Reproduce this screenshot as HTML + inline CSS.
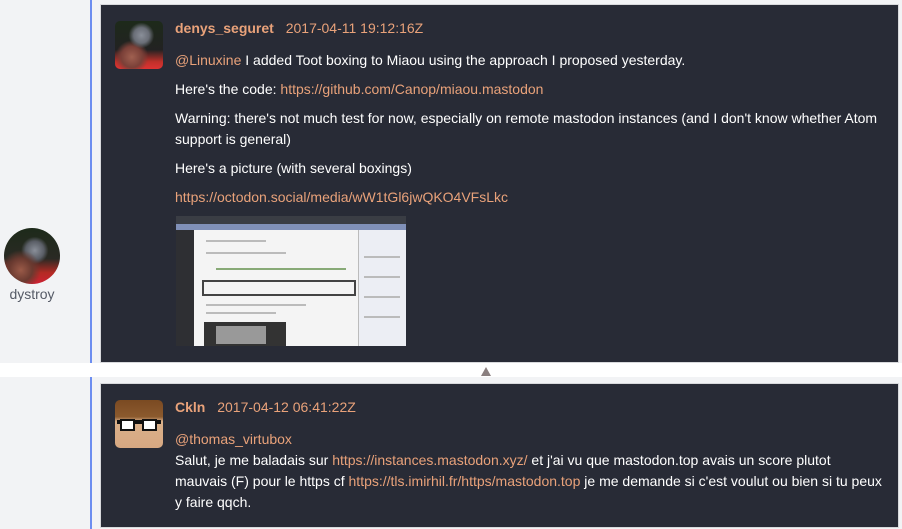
<!DOCTYPE html>
<html><head><meta charset="utf-8"><style>
*{margin:0;padding:0;box-sizing:border-box}
body{width:902px;height:529px;overflow:hidden;background:#f2f3f5;font-family:"Liberation Sans",sans-serif;font-size:14px;position:relative}
.vl{position:absolute;left:90px;top:0;width:2px;height:529px;background:#6d8ef0}
.gap{position:absolute;left:0;top:363px;width:902px;height:14px;background:#fff}
.card{position:absolute;left:100px;width:799px;background:#282b36;border:1px solid #d8d9dc;color:#fff}
.av{position:absolute;left:14px;width:48px;height:48px;border-radius:5px;overflow:hidden}
.n{position:absolute;left:74px;color:#e9a27a;font-size:14px}
.n b{margin-right:8px}
.t{position:absolute;left:74px;width:712px;line-height:21px}
.t p{margin-bottom:8px}
a{color:#e9a27a;text-decoration:none}
.ln{position:absolute;height:2px;background:#bbb}
</style></head><body>
<div class="vl"></div>
<div class="gap"></div>
<div style="position:absolute;left:4px;top:228px;width:56px;height:56px;border-radius:50%;overflow:hidden;background:radial-gradient(circle at 30% 75%,#9a5a48 0,#6a3a30 20%,transparent 35%),radial-gradient(circle at 55% 40%,#8a8f99 0,#5a5e66 20%,transparent 30%),linear-gradient(180deg,#1d2a1a 0,#2a2a24 55%,#b52a24 80%,#c23 100%)"></div>
<div style="position:absolute;left:0;top:286px;width:64px;text-align:center;color:#555a66;font-size:14px">dystroy</div>

<div class="card" style="top:4px;height:359px">
<div class="av" style="top:16px;background:radial-gradient(circle at 55% 30%,#8a8f99 0,#6a6e77 18%,transparent 30%),radial-gradient(circle at 35% 75%,#a06050 0,#7a4038 22%,transparent 35%),linear-gradient(180deg,#1d2a1a 0,#222 60%,#c0302a 85%,#d33 100%)"></div>
<div class="n" style="top:15px"><b>denys_seguret</b> 2017-04-11 19:12:16Z</div>
<div class="t" style="top:45px">
<p><a>@Linuxine</a> I added Toot boxing to Miaou using the approach I proposed yesterday.</p>
<p>Here's the code: <a>https://github.com/Canop/miaou.mastodon</a></p>
<p>Warning: there's not much test for now, especially on remote mastodon instances (and I don't know whether Atom support is general)</p>
<p>Here's a picture (with several boxings)</p>
<p><a>https://octodon.social/media/wW1tGl6jwQKO4VFsLkc</a></p>
</div>
<div style="position:absolute;left:75px;top:211px;width:230px;height:130px;background:#f4f4f4;overflow:hidden">
<div style="position:absolute;left:0;top:0;width:230px;height:8px;background:#3a3d44"></div>
<div style="position:absolute;left:0;top:8px;width:230px;height:6px;background:#8090b8"></div>
<div style="position:absolute;left:0;top:14px;width:18px;height:116px;background:#2e2f33"></div>
<div style="position:absolute;left:182px;top:14px;width:48px;height:116px;background:#eceef4;border-left:1px solid #bbb"></div>
<div class="ln" style="left:30px;top:24px;width:60px"></div>
<div class="ln" style="left:30px;top:36px;width:80px"></div>
<div class="ln" style="left:40px;top:52px;width:130px;background:#8a7"></div>
<div style="position:absolute;left:26px;top:64px;width:154px;height:16px;border:2px solid #444"></div>
<div class="ln" style="left:30px;top:88px;width:100px"></div>
<div class="ln" style="left:30px;top:96px;width:70px"></div>
<div style="position:absolute;left:28px;top:106px;width:82px;height:24px;background:#333"></div>
<div style="position:absolute;left:40px;top:110px;width:50px;height:18px;background:#999"></div>
<div class="ln" style="left:188px;top:40px;width:36px"></div>
<div class="ln" style="left:188px;top:60px;width:36px"></div>
<div class="ln" style="left:188px;top:80px;width:36px"></div>
<div class="ln" style="left:188px;top:100px;width:36px"></div>
</div>
</div>

<div style="position:absolute;left:481px;top:367px;width:0;height:0;border-left:5px solid transparent;border-right:5px solid transparent;border-bottom:9px solid #8a7f7f"></div>

<div class="card" style="top:383px;height:145px">
<div class="av" style="top:16px;background:linear-gradient(180deg,#7a4a22 0,#8b5a2e 35%,#d9b08a 45%,#d7a882 100%)">
<div style="position:absolute;left:2px;top:20px;width:44px;height:4px;background:#111"></div>
<div style="position:absolute;left:5px;top:19px;width:15px;height:12px;border:2px solid #111;background:#fff"></div>
<div style="position:absolute;left:27px;top:19px;width:15px;height:12px;border:2px solid #111;background:#fff"></div>
</div>
<div class="n" style="top:15px"><b>Ckln</b> 2017-04-12 06:41:22Z</div>
<div class="t" style="top:45px">
<a>@thomas_virtubox</a><br>Salut, je me baladais sur <a>https://instances.mastodon.xyz/</a> et j'ai vu que mastodon.top avais un score plutot<br>mauvais (F) pour le https cf <a>https://tls.imirhil.fr/https/mastodon.top</a> je me demande si c'est voulut ou bien si tu peux<br>y faire qqch.
</div>
</div>
</body></html>
